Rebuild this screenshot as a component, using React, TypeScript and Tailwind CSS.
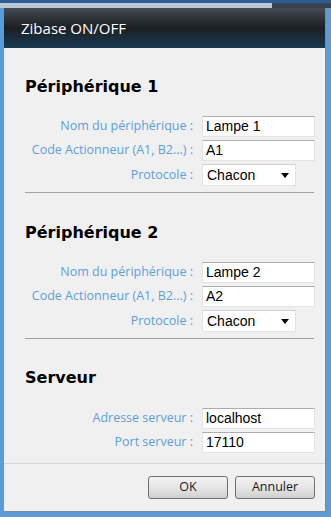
import { ReactNode } from 'react';

const labelFont = { fontFamily: '"Open Sans", "Noto Sans", sans-serif' };

const Field = ({ label, children }: { label: string; children: ReactNode }) => (
  <div className="flex items-center">
    <div className="w-[198px] pr-[9px] text-right text-[12.5px] leading-none text-[#5b9fdb]">{label}</div>
    {children}
  </div>
);

const TextBox = ({ value }: { value: string }) => (
  <div className="flex h-[21px] w-[113px] items-center border border-[#e3e3e3] border-t-[#adadad] bg-white pl-[3px] font-['Liberation_Sans',sans-serif] text-[14px] text-black">
    {value}
  </div>
);

const Select = ({ value }: { value: string }) => (
  <div className="flex h-[22px] w-[94px] items-center justify-between border border-[#e3e3e3] border-t-[#cfcfcf] bg-white pl-[4px] pr-[6px] font-['Liberation_Sans',sans-serif] text-[14px] text-black">
    <span>{value}</span>
    <svg width="8" height="5" viewBox="0 0 8 5">
      <path d="M0 0h8L4 5z" fill="#000" />
    </svg>
  </div>
);

const Heading = ({ children }: { children: ReactNode }) => (
  <h2 className="font-['DejaVu_Sans',sans-serif] text-[16px] font-bold leading-[20px] text-black">{children}</h2>
);

const Separator = () => <div className="ml-[21px] mr-[11px] h-px bg-[#a0a0a0]" />;

const DeviceSection = ({ n, name, code }: { n: number; name: string; code: string }) => (
  <div>
    <div className="pl-[21px]">
      <Heading>Périphérique {n}</Heading>
    </div>
    <div className="mt-[19px] flex flex-col gap-[3px]">
      <Field label="Nom du périphérique :">
        <TextBox value={name} />
      </Field>
      <Field label="Code Actionneur (A1, B2...) :">
        <TextBox value={code} />
      </Field>
      <Field label="Protocole :">
        <Select value="Chacon" />
      </Field>
    </div>
  </div>
);

const Button = ({ children }: { children: ReactNode }) => (
  <button className="h-[23px] w-[80px] rounded-[3px] border border-[#707070] bg-gradient-to-b from-[#f2f2f2] via-[#e6e6e6] to-[#d0d0d0] text-[12.5px] text-[#1a1a1a]">
    {children}
  </button>
);

export default function App() {
  return (
    <div className="h-[517px] w-[331px] overflow-hidden bg-[#5c9bd6]" style={labelFont}>
      <div className="h-[3px] bg-[#2c5d94]" />
      <div className="flex h-[5px]">
        <div className="w-[272px] bg-[#b9c6d4]" />
        <div className="flex-1 bg-[#3a4450]" />
      </div>
      <div className="ml-[4px] mr-[5px] flex h-[504px] flex-col border-b border-[#7d8a96] border-r">
        <div className="flex h-[40px] items-center bg-gradient-to-b from-[#454b52] via-[#1b1f23] to-[#173a52] pl-[17px] text-[15px] text-white">
          Zibase ON/OFF
        </div>
        <div className="flex flex-1 flex-col bg-[#f0f0f0]">
          <div className="pt-[29px]">
            <DeviceSection n={1} name="Lampe 1" code="A1" />
          </div>
          <div className="mt-[6px]">
            <Separator />
          </div>
          <div className="mt-[30px]">
            <DeviceSection n={2} name="Lampe 2" code="A2" />
          </div>
          <div className="mt-[6px]">
            <Separator />
          </div>
          <div className="mt-[29px] pl-[21px]">
            <Heading>Serveur</Heading>
          </div>
          <div className="mt-[20px] flex flex-col gap-[3px]">
            <Field label="Adresse serveur :">
              <TextBox value="localhost" />
            </Field>
            <Field label="Port serveur :">
              <TextBox value="17110" />
            </Field>
          </div>
          <div className="mt-[10px] h-px bg-[#d6d6d6]" />
          <div className="flex justify-end gap-[7px] pr-[10px] pt-[12px]">
            <Button>OK</Button>
            <Button>Annuler</Button>
          </div>
        </div>
      </div>
    </div>
  );
}
